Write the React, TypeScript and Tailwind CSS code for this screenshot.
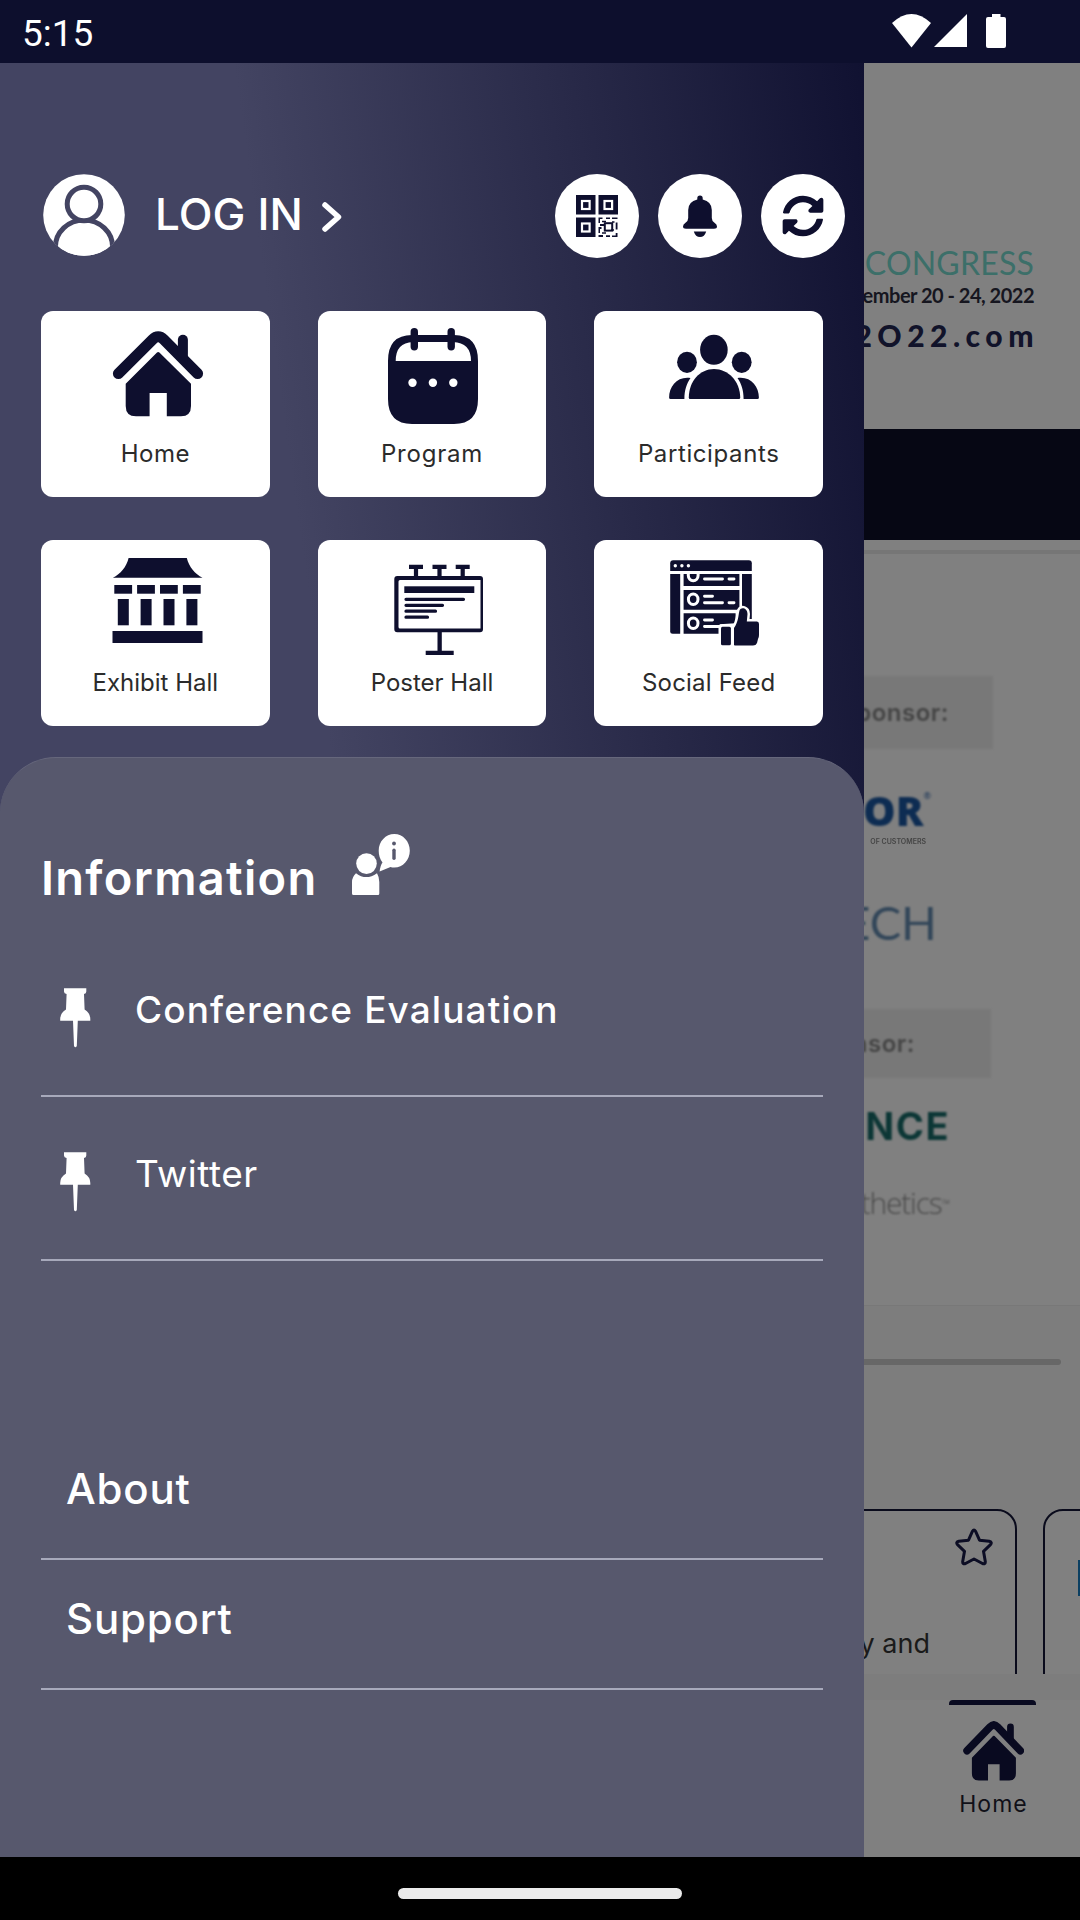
import type { ReactNode } from "react";
import { FaSyncAlt } from "react-icons/fa";

const NAVY = "#0e0f2e";

/* ═══ Icons ═══ */

function HomeGlyph() {
  return (
    <>
      <path d="M118.4 373.6L152.5 339.6Q158.2 334 163.9 339.6L197.6 373.6" fill="none" stroke="currentColor" strokeWidth="11" strokeLinecap="round" strokeLinejoin="round" />
      <path d="M177.9 339.7a5 5 0 0 1 10 0V364l-10-10z" />
      <path d="M157 352.6q1.2-1.2 2.4 0L191 383.7V406q0 10.3-10 10.3h-14.2V393h-17.2v23.3H136q-10.3 0-10.3-10.3V383.7z" />
    </>
  );
}

function ProgramGlyph() {
  return (
    <>
      <path fillRule="evenodd" d="M412 335H454Q478 335 478 361V399Q478 424 454 424H412Q388 424 388 399V361Q388 335 412 335ZM413 342Q395.7 342.5 395.7 361H471Q471 342.5 453 342Z" />
      <rect x="410.6" y="328" width="7.4" height="22.5" rx="3.7" />
      <rect x="447.5" y="328" width="7.4" height="22.5" rx="3.7" />
      <g fill="#fff">
        <circle cx="412.5" cy="382.8" r="4.2" />
        <circle cx="432.9" cy="382.8" r="4.2" />
        <circle cx="453.3" cy="382.8" r="4.2" />
      </g>
    </>
  );
}

function ParticipantsGlyph() {
  return (
    <>
      <ellipse cx="713.9" cy="349.8" rx="13.8" ry="15" />
      <ellipse cx="687" cy="362.3" rx="9.9" ry="10.6" />
      <ellipse cx="741.7" cy="362.3" rx="9.9" ry="10.6" />
      <path d="M690 399q-1.2 0-1.2-1.5C689 381 700 369 714 369s26 12 26.2 28.5q0 1.5-1.2 1.5z" />
      <path d="M670.5 399q-1.4 0-1.4-1.5c0-11.5 8.5-21.5 21.4-19.5c-4 6-6 12-6.1 21z" />
      <path d="M757.5 399q1.4 0 1.4-1.5c0-11.5-8.5-21.5-21.4-19.5c4 6 6 12 6.1 21z" />
    </>
  );
}

function ExhibitGlyph() {
  return (
    <>
      <path d="M128.6 558H186.8C189 567 195 574 202.5 577.7H112.9C120.5 574 126.5 567 128.6 558z" />
      {[114.3, 137.1, 160, 182.9].map(x => (
        <g key={x}>
          <rect x={x} y="585" width="17.8" height="8.7" />
          <rect x={x + 3.5} y="599" width="11" height="26.3" />
        </g>
      ))}
      <rect x="112.5" y="631" width="90" height="12" />
    </>
  );
}

function PosterGlyph() {
  return (
    <>
      <path fillRule="evenodd" d="M397.3 576H480q3 0 3 3V629.3q0 3-3 3H397.3q-3 0-3-3V579q0-3 3-3ZM400 580q-1.5 0-1.5 1.5V627q0 1.5 1.5 1.5H480.5V580Z" />
      {[409, 432.5, 455.7].map(x => (
        <path key={x} d={`M${x} 564.7h14v4.3h-4.9v8h-4.2v-8h-4.9z`} />
      ))}
      <rect x="404.3" y="586.3" width="70" height="6.7" />
      <path d="M406 599.3h57.5M406 605.3h36.5M406 611.2h29.5M406 617.2h21.5" stroke="currentColor" strokeWidth="3.2" strokeLinecap="round" />
      <path d="M437.5 632h4.3v18.7h11.9v4.3h-28v-4.3h11.8z" />
    </>
  );
}

function SocialGlyph() {
  return (
    <>
      <path d="M673.2 560.3h75.6q3 0 3 3V571h-81.6v-7.7q0-3 3-3z" />
      <path d="M670.2 574h10v59.7h-7.5q-2.5 0-2.5-2.5z" />
      <path d="M742 574h9.8v47H742z" />
      <path d="M683.6 574h55.8v12h-55.8zM683.6 590h55.8v19.7h-55.8zM683.6 613.2h52v10l-16 1v9.5h-36z" />
      <g fill="#fff">
        <circle cx="675.3" cy="565.7" r="1.7" />
        <circle cx="681.9" cy="565.7" r="1.7" />
        <circle cx="688.4" cy="565.7" r="1.7" />
      </g>
      <g fill="none" stroke="#fff">
        <path d="M688.3 574v1.5a4.9 5.2 0 0 0 9.8 0V574" strokeWidth="3" />
        <ellipse cx="693.2" cy="599.3" rx="4.8" ry="5.2" strokeWidth="3" />
        <ellipse cx="693.2" cy="623.3" rx="4.8" ry="5.2" strokeWidth="3" />
        <path d="M704.5 579h18M729 579h5M704.5 596.3h8M704.5 602.8h18M729 602.8h5M704.5 620h8M704.5 626.5h15" strokeWidth="2.9" strokeLinecap="round" />
      </g>
      <g stroke="#fff" strokeWidth="5" paintOrder="stroke" strokeLinejoin="round">
        <rect x="721" y="626.7" width="9.9" height="18.6" rx="1.5" />
        <path d="M734 645V628C738.5 622 738.3 615 739.5 610.5C741 606.5 747.5 608 747.5 614L746.8 621.5H757Q759 621.5 759 624V635Q759 637.5 758 639L757 643Q756 645.6 753 645.6H737Q734 645.6 734 645z" />
      </g>
    </>
  );
}

function AvatarIcon() {
  return (
    <svg width="82" height="82" viewBox="43 175 82 82" className="-mt-0.5">
      <defs>
        <clipPath id="avatarClip">
          <circle cx="84" cy="216" r="40.8" />
        </clipPath>
      </defs>
      <g clipPath="url(#avatarClip)">
        <rect x="43" y="175" width="82" height="82" fill="#fff" />
        <ellipse cx="84" cy="248" rx="28.6" ry="27" fill="#fff" stroke="#434462" strokeWidth="5" />
        <path d="M51 244h6.9v18H51zM110.1 244h6.9v18h-6.9z" fill="#434462" />
        <circle cx="84" cy="205" r="16.8" fill="#fff" stroke="#434462" strokeWidth="5" />
      </g>
    </svg>
  );
}

function QrIcon() {
  return (
    <svg width="42" height="42" viewBox="0 0 42 42" fill={NAVY}>
      {[[0, 0], [22.5, 0], [0, 22.5]].map(([x, y]) => (
        <g key={`${x}-${y}`}>
          <rect x={x} y={y} width="19.5" height="19.5" />
          <rect x={x + 6} y={y + 6} width="7.6" height="8" fill={NAVY} stroke="#fff" strokeWidth="2.2" />
        </g>
      ))}
      <path d="M22.5 22.5h4v1.5h-2.5v4h-1.5zM30 22.5h4v1.6h-4zM36 22.5h5.5v1.6H36zM22.5 32h3v2h-1.5v4h-1.5zM39.7 27.5h1.8v7h-1.8zM39.7 38h1.8v4H36v-1.6h3.7zM22.5 40h4.5v2h-4.5zM30 40.3h4V42h-4zM24 29h4v2h-4z" />
      <rect x="28.8" y="28.2" width="7.4" height="7.4" fill="none" stroke={NAVY} strokeWidth="2" />
      <path d="M26 26.5h4M35 35h3M26 38h4M36 27h2.5" stroke={NAVY} strokeWidth="1.6" />
    </svg>
  );
}

function BellIcon() {
  return (
    <svg width="34" height="42" viewBox="0 0 34 42" fill={NAVY}>
      <path d="M14.3 3.2a2.7 2.7 0 0 1 5.4 0V4.4Q28.8 6.5 28.8 15V23Q28.8 26 31.5 27.8Q34 29.5 34 31.5Q34 33.7 31 33.7H3Q0 33.7 0 31.5Q0 29.5 2.5 27.8Q5.2 26 5.2 23V15Q5.2 6.5 14.3 4.4z" />
      <path d="M10.8 36.5H23.2Q21.5 42 17 42T10.8 36.5z" />
    </svg>
  );
}

function InfoIcon() {
  return (
    <svg width="58" height="62" viewBox="351 834 58 62" fill="#fff">
      <ellipse cx="365.5" cy="863.6" rx="10.3" ry="10.4" />
      <path d="M355 873.2Q365 881 376 873.2Q378.3 877 378.3 882V893.5Q378.3 895 377 895H352.5Q351 895 351 893.5V882Q351 877 355 873.2z" />
      <path d="M393.3 834C402 834 408.8 841.5 408.8 850.7S402 867.5 393.3 867.5Q391 867.5 389.5 867L378.6 871.5Q379.5 865 381.5 862.5Q377.7 857.5 377.7 850.7C377.7 841.5 384.6 834 393.3 834z" />
      <circle cx="393" cy="843.5" r="1.9" fill="#57586d" />
      <rect x="391.3" y="848.5" width="3.4" height="11.5" rx="1.7" fill="#57586d" />
    </svg>
  );
}

function PinIcon() {
  return (
    <svg width="31" height="60" viewBox="60 988 31 60" fill="#fff">
      <path d="M64 988.3H86.3V991.5Q86.3 993.5 84 994L84.6 1009.5Q90.3 1013 90.3 1019V1020.7H77.8L76.8 1046Q75.4 1048.5 74 1046L73 1020.7H60.2V1019Q60.2 1013 66 1009.5L66.6 994Q64 993.5 64 991.5z" />
    </svg>
  );
}

function TileIcon({ x, y, children }: { x: number; y: number; children: ReactNode }) {
  return (
    <svg width="228" height="120" viewBox={`${x} ${y} 228 120`} fill="currentColor" className="text-[#0e0f2e]">
      {children}
    </svg>
  );
}

/* ═══ Data ═══ */

const tiles = [
  { label: "Home", x: 41, y: 311, glyph: <HomeGlyph />, tracking: "tracking-[0.5px]" },
  { label: "Program", x: 318, y: 311, glyph: <ProgramGlyph />, tracking: "tracking-[0.8px]" },
  { label: "Participants", x: 595, y: 311, glyph: <ParticipantsGlyph />, tracking: "tracking-[0.6px]" },
  { label: "Exhibit Hall", x: 41, y: 540, glyph: <ExhibitGlyph />, tracking: "tracking-[0px]" },
  { label: "Poster Hall", x: 318, y: 540, glyph: <PosterGlyph />, tracking: "tracking-[0px]" },
  { label: "Social Feed", x: 595, y: 540, glyph: <SocialGlyph />, tracking: "tracking-[0.2px]" },
];

const infoLinks = [
  { label: "Conference Evaluation", style: "font-medium tracking-[1.1px]" },
  { label: "Twitter", style: "font-normal tracking-[0.5px]" },
];

/* ═══ Sections ═══ */

function StatusBar() {
  return (
    <header className="flex h-[63px] items-start justify-between bg-[#0d0f2d] pl-[22px] pr-[74px] text-white">
      <span className="pt-3 font-['Roboto',sans-serif] text-[37px] leading-[43px]">5:15</span>
      <svg width="114" height="34" viewBox="892 14 114 34" fill="#fff" className="mt-3.5">
        <path d="M892 23Q911.5 5 931 23L911.5 47.5z" />
        <path d="M967 14V47H934z" />
        <path d="M992 14h8.5v3h3.5q2 0 2 2v27q0 2-2 2h-16q-2 0-2-2V19q0-2 2-2h4z" />
      </svg>
    </header>
  );
}

function Drawer() {
  return (
    <aside className="flex w-[864px] shrink-0 flex-col bg-[#57586d]">
      <div className="h-[754px] shrink-0 bg-[linear-gradient(82deg,#434462_35%,#0e0f2f_103%)] pt-[111px]">
        <div className="flex h-[84px] items-center pl-[43px] pr-[19px]">
          <AvatarIcon />
          <span className="-mt-1 ml-[30px] text-[44px] font-medium leading-[56px] tracking-[0.1px] text-white">LOG IN</span>
          <svg width="22" height="32" viewBox="0 0 22 32" className="ml-[18px] mt-0.5">
            <path d="M4 4L17.5 16L4 28" fill="none" stroke="#fff" strokeWidth="5.5" strokeLinecap="round" strokeLinejoin="round" />
          </svg>
          <div className="ml-auto flex gap-[19px]">
            <button className="flex size-[84px] items-center justify-center rounded-full bg-white"><QrIcon /></button>
            <button className="flex size-[84px] items-center justify-center rounded-full bg-white"><BellIcon /></button>
            <button className="flex size-[84px] items-center justify-center rounded-full bg-white">
              <FaSyncAlt size={42} color={NAVY} />
            </button>
          </div>
        </div>

        <div className="mt-[53px] grid grid-cols-3 gap-x-12 gap-y-[43px] px-[41px]">
          {tiles.map(tile => (
            <button key={tile.label} className="flex h-[186px] flex-col items-center rounded-xl bg-white">
              <TileIcon x={tile.x} y={tile.y}>{tile.glyph}</TileIcon>
              <span className={`mt-2 text-[24px] leading-[30px] text-[#2b2b2b] ${tile.tracking}`}>{tile.label}</span>
            </button>
          ))}
        </div>
      </div>

      <div className="-mt-[60px] grow rounded-t-[56px] border-t border-[#66677c] bg-[#57586d] px-[41px] text-white">
        <div className="flex h-[138px] items-end pt-[76px]">
          <h2 className="-mb-[10px] text-[47px] font-semibold leading-[56px] tracking-[1.3px]">Information</h2>
          <div className="ml-[34px] h-[62px]"><InfoIcon /></div>
        </div>

        <ul>
          {infoLinks.map((link, i) => (
            <li key={link.label} className={i === 0 ? "flex h-[201px] border-b-2 border-[#a7a9bb] pl-[19px] pt-[92px]" : "flex h-[164px] border-b-2 border-[#a7a9bb] pl-[19px] pt-[55px]"}>
              <PinIcon />
              <span className={`-mt-[2px] ml-[44px] text-[37px] leading-[48px] ${link.style}`}>{link.label}</span>
            </li>
          ))}
        </ul>

        <ul className="mt-[169px]">
          {["About", "Support"].map(label => (
            <li key={label} className="h-[130px] border-b-2 border-[#a7a9bb] pl-[25px] pt-[31px] text-[42px] font-medium leading-[56px] tracking-[0.8px]">
              {label}
            </li>
          ))}
        </ul>
      </div>
    </aside>
  );
}

// the page behind the drawer, already dimmed by the scrim
function DimmedPage() {
  return (
    <main className="flex w-[216px] flex-col overflow-hidden whitespace-nowrap bg-[#808080]">
      <section className="flex h-[366px] shrink-0 flex-col items-end pr-[46px] pt-[180px] font-['Lato',sans-serif]">
        <div className="text-[32px] leading-[40px] tracking-[0.2px] text-[#3c6f69]">CONGRESS</div>
        <div className="text-[20px] font-bold leading-[24px] tracking-[-0.5px] text-[#16161f]">November 20 - 24, 2022</div>
        <div className="-mr-[5px] mt-3 text-[30px] font-black leading-[32px] tracking-[5.5px] text-[#11132a]">2O22.com</div>
      </section>
      <div className="h-[111px] shrink-0 bg-[#060714]" />
      <div className="mt-[10px] h-1 shrink-0 bg-[#767676]" />

      <section className="flex h-[752px] shrink-0 flex-col items-end border-b border-[#787878]">
        <div className="mr-[87px] mt-[122px] flex h-[73px] w-[400px] items-center justify-end bg-[#787878] pr-[44px] text-[24px] font-semibold tracking-[0.5px] text-[#444] blur-[1px]">Sponsor:</div>
        <div className="mr-[149px] mt-[37px] flex items-start font-['Open_Sans',sans-serif] text-[#0d2c52] blur-[1px]">
          <span className="text-[41px] font-extrabold leading-[48px]">OR</span>
          <span className="mt-1 text-[9px] leading-3">®</span>
        </div>
        <div className="mr-[154px] text-[7px] font-semibold leading-[16px] text-[#444] blur-[0.6px]">OF CUSTOMERS</div>
        <div className="mr-[143px] mt-[44px] font-['Lato',sans-serif] text-[47px] leading-[56px] text-[#324659] blur-[1px]">TECH</div>
        <div className="mr-[89px] mt-[59px] flex h-[69px] w-[400px] items-center justify-end bg-[#787878] pr-[76px] text-[24px] font-semibold tracking-[0.5px] text-[#444] blur-[1px]">Sponsor:</div>
        <div className="mr-[130px] mt-[24px] text-[38px] font-bold leading-[48px] tracking-[1.5px] text-[#0b3635] blur-[1px]">NCE</div>
        <div className="mr-[131px] mt-[29px] font-['Open_Sans',sans-serif] text-[30px] font-light leading-[48px] tracking-[-1.2px] text-[#484848] blur-[1px]">
          aesthetics<sup className="text-[12px]">™</sup>
        </div>
      </section>

      <section className="h-[394px] shrink-0 bg-[#7d7d7d] pt-[53px]">
        <div className="mr-[19px] h-1.5 rounded-r-full bg-[#676767]" />
        <div className="mt-[144px] flex h-[165px] w-[216px] gap-[26px] overflow-hidden">
          <div className="-ml-8 flex h-[220px] w-[185px] shrink-0 flex-col items-end rounded-[20px] border-2 border-[#0a0b1c] bg-[#808080]">
            <svg width="38" height="38" viewBox="0 0 38 38" className="mr-[22px] mt-[17px]">
              <path d="M17.5 3.2Q19 .6 20.5 3.2L24.5 12.2L34.2 13.3Q37.5 14 35.5 16.6L28.5 23.3L30.3 33.5Q30.5 36.8 27.5 35.5L19 31L10.5 35.5Q7.5 36.8 7.7 33.5L9.5 23.3L2.5 16.6Q.5 14 3.8 13.3L13.5 12.2z" fill="none" stroke="#0c0d24" strokeWidth="3" strokeLinejoin="round" />
            </svg>
            <div className="mr-[85px] mt-[60px] text-[27px] leading-[36px] text-[#1a1a1a]">y and</div>
          </div>
          <div className="h-[220px] w-[185px] shrink-0 rounded-[20px] border-2 border-[#0a0b1c] bg-[#808080] pl-[33px] pt-[49px]">
            <div className="h-9 w-20 bg-[#0b3f62]" />
          </div>
        </div>
      </section>

      <nav className="flex grow flex-col items-end bg-[#808080] pr-[44px]">
        <div className="flex w-[87px] flex-col items-center">
          <div className="h-[5px] w-full rounded-t-sm bg-[#090a20]" />
          <svg width="61" height="60" viewBox="112.5 331 90.5 86" preserveAspectRatio="none" fill="currentColor" className="ml-px mt-4 text-[#090a20]">
            <HomeGlyph />
          </svg>
          <span className="ml-0.5 mt-2 text-[23px] leading-[30px] tracking-[1px] text-[#101018]">Home</span>
        </div>
      </nav>
    </main>
  );
}

export default function App() {
  return (
    <div className="flex h-[1920px] w-[1080px] flex-col overflow-hidden bg-black font-['Inter',sans-serif]">
      <StatusBar />
      <div className="flex h-[1794px] shrink-0">
        <Drawer />
        <DimmedPage />
      </div>
      <footer className="flex h-[63px] items-center justify-center">
        <div className="mt-[9px] h-[11px] w-[284px] rounded-full bg-[#ebebeb]" />
      </footer>
    </div>
  );
}
